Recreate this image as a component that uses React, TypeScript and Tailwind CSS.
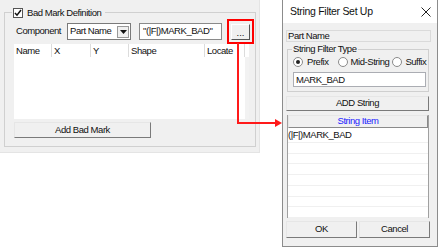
import React from "react";

const font = { fontFamily: '"Liberation Sans", Arial, sans-serif' };

function Radio({ checked }: { checked?: boolean }) {
  return (
    <span className="w-[10px] h-[10px] rounded-full border border-[#8a8a8a] bg-white flex items-center justify-center shrink-0">
      {checked && <span className="w-[4px] h-[4px] rounded-full bg-[#222]" />}
    </span>
  );
}

const btn =
  "bg-[#f0f0f0] border border-t-[#e6e6e6] border-l-[#e6e6e6] border-r-[#7a7a7a] border-b-[#7a7a7a] flex items-center justify-center whitespace-nowrap";

export default function App() {
  return (
    <div className="relative w-[439px] h-[247px] bg-white overflow-hidden text-[9.5px] tracking-[-0.45px] text-[#111] whitespace-nowrap" style={font}>
      {/* Left panel */}
      <div className="absolute left-0 top-0 w-[260px] h-[153px] bg-[#f0f0f0] border-r border-b border-[#e4e4e4] pt-[12px] pl-[4px]">
        <div className="relative w-[252px] h-[135px] border border-[#d0d0d0] pt-[10px] pl-[9px]">
          {/* legend */}
          <div className="absolute left-[7px] top-[-6px] flex items-center gap-[4px] bg-[#f0f0f0] px-[1px] pr-[4px] leading-[12px]">
            <span className="w-[10px] h-[10px] border border-[#555] bg-white flex items-center justify-center">
              <svg width="8" height="8" viewBox="0 0 8 8">
                <path d="M1 4 L3 6.2 L7 1" stroke="#111" strokeWidth="1.5" fill="none" />
              </svg>
            </span>
            <span>Bad Mark Definition</span>
          </div>
          {/* row */}
          <div className="flex items-center h-[17px]">
            <span className="w-[53px] pl-[2px]">Component</span>
            <div className="w-[64px] h-[17px] border border-[#7a7a7a] bg-white flex items-center justify-between pl-[2px] pr-[1px]">
              <span>Part Name</span>
              <span className="w-[12px] h-[12px] border border-[#999] bg-[#f0f0f0] flex items-center justify-center">
                <svg width="7" height="4" viewBox="0 0 7 4">
                  <path d="M0 0 L7 0 L3.5 4 Z" fill="#111" />
                </svg>
              </span>
            </div>
            <div className="ml-[8px] w-[83px] h-[17px] border border-[#8a8a8a] bg-white flex items-center pl-[3px]">
              "(|F|)MARK_BAD"
            </div>
            <div className="ml-[5px] w-[27px] h-[25px] border-2 border-[#ff0000] flex items-center justify-center">
              <span className="w-[19px] h-[16px] border border-t-[#fff] border-l-[#fff] border-r-[#555] border-b-[#555] bg-[#f0f0f0] flex items-end justify-center leading-[10px] pb-[1px] tracking-normal">
                ...
              </span>
            </div>
          </div>
          {/* table */}
          <div className="mt-[4px] w-[235px] h-[75px] bg-white relative">
            <div className="flex h-[13px] items-center">
              {[
                ["Name", 38],
                ["X", 39],
                ["Y", 38],
                ["Shape", 76],
                ["Locate", 40],
              ].map(([n, w]) => (
                <div
                  key={n as string}
                  className="h-[13px] border-r border-[#dcdcdc] pl-[2px] leading-[13px] overflow-hidden"
                  style={{ width: w as number }}
                >
                  {n}
                </div>
              ))}
            </div>
            <div className="absolute right-0 top-[13px] w-[4px] h-[62px] bg-[#f2f2f2]" />
          </div>
          {/* button */}
          <div className={`mt-[3px] w-[137px] h-[16px] ${btn}`}>Add Bad Mark</div>
        </div>
      </div>

      {/* Red connector arrow */}
      <div className="absolute left-[237px] top-[43px] w-[2px] h-[81px] bg-[#ff1a1a]" />
      <div className="absolute left-[237px] top-[122px] w-[40px] h-[2px] bg-[#ff1a1a]" />
      <svg className="absolute left-[275px] top-[119px]" width="7" height="8" viewBox="0 0 7 8">
        <path d="M0 0 L7 4 L0 8 Z" fill="#ff1a1a" />
      </svg>

      {/* Dialog window */}
      <div className="absolute left-[282px] top-0 w-[156px] h-[247px] border border-t-0 border-[#8c8c8c] bg-[#f0f0f0] flex flex-col">
        <div className="h-[23px] bg-white flex items-center justify-between pl-[7px] pr-[6px]">
          <span className="text-[10.5px] tracking-[-0.3px]">String Filter Set Up</span>
          <svg width="10" height="10" viewBox="0 0 10 10">
            <path d="M0.5 0.5 L9.5 9.5 M9.5 0.5 L0.5 9.5" stroke="#222" strokeWidth="1" />
          </svg>
        </div>
        <div className="flex flex-col px-[3px] pt-[7px]">
          <div className="w-[145px] h-[12px] border border-[#dadada] bg-[#f0f0f0] leading-[10px] pl-[1px]">Part Name</div>
          <div className="relative mt-[7px] ml-[1px] w-[142px] h-[43px] border border-[#cfcfcf] pt-[6px] pl-[5px]">
            <span className="absolute left-[4px] top-[-7px] bg-[#f0f0f0] px-[1px] leading-[12px]">String Filter Type</span>
            <div className="flex items-center h-[12px]">
              <Radio checked />
              <span className="ml-[4px]">Prefix</span>
              <span className="ml-[9px]"><Radio /></span>
              <span className="ml-[3px]">Mid-String</span>
              <span className="ml-[3px]"><Radio /></span>
              <span className="ml-[3px]">Suffix</span>
            </div>
            <div className="mt-[4px] w-[133px] h-[15px] bg-white border border-[#abadb3] leading-[13px] pl-[2px]">MARK_BAD</div>
          </div>
          <div className={`mt-[4px] w-[143px] h-[15px] ${btn}`}>ADD String</div>
          <div className="mt-[4px] ml-[1px] w-[142px] h-[103px] bg-white border-l border-r border-[#a0a0a0] flex flex-col">
            <div className="h-[13px] bg-[#f0f0f0] border border-t-[#e6e6e6] border-l-[#e6e6e6] border-r-[#8a8a8a] border-b-[#8a8a8a] flex items-center justify-center text-[#1a1aff]">
              String Item
            </div>
            <div className="h-[15px] border-b border-[#f0f0f0] leading-[14px]">(|F|)MARK_BAD</div>
            {[0, 1, 2, 3, 4, 5, 6].map((i) => (
              <div key={i} className="h-[11px] border-b border-[#f0f0f0]" />
            ))}
          </div>
          <div className="mt-[3px] flex gap-[2px]">
            <div className={`w-[71px] h-[17px] ${btn}`}>OK</div>
            <div className={`w-[71px] h-[17px] ${btn}`}>Cancel</div>
          </div>
        </div>
      </div>
    </div>
  );
}
